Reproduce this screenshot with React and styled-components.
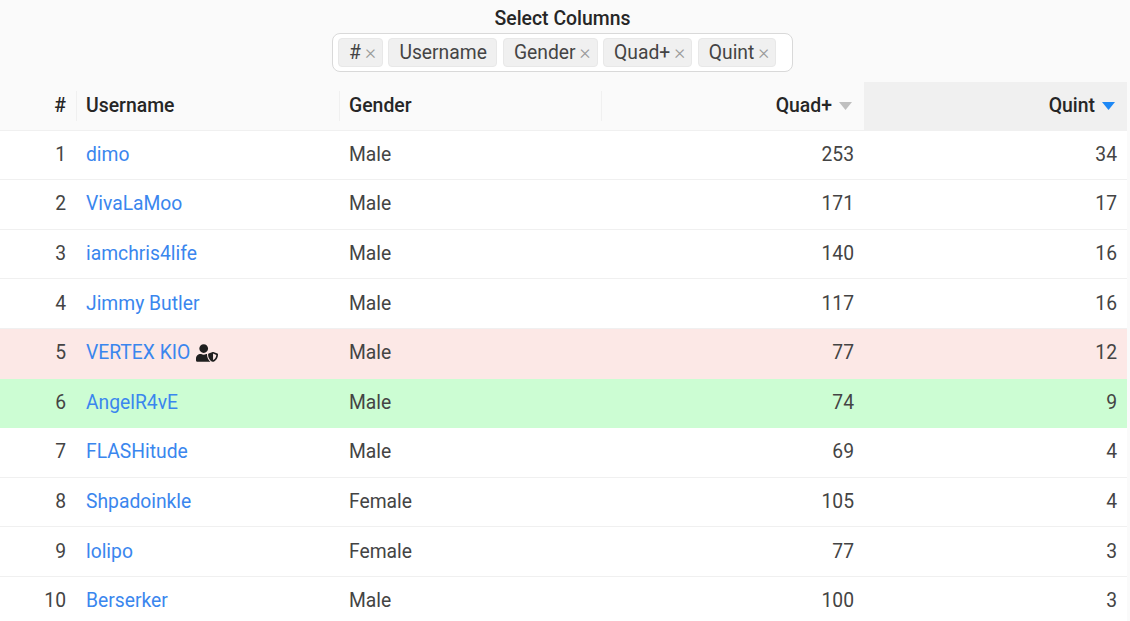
import React from "react";
import styled, { createGlobalStyle } from "styled-components";
import { FaUserShield } from "react-icons/fa";

const Global = createGlobalStyle`
  html, body { margin: 0; padding: 0; background: #fafafa; }
  body { font-family: Roboto, "Liberation Sans", sans-serif; color: #333; overflow: hidden; }
`;
const Page = styled.div`width: 1130px; height: 621px; overflow: hidden; background: #fafafa;`;
const Top = styled.div`
  width: 1125px; height: 82px; background: #fafafa; padding-top: 7px; box-sizing: border-box;
  display: flex; flex-direction: column; align-items: center;
`;
const Title = styled.div`font-size: 19.4px; font-weight: 500; line-height: 23px; color: #262626;`;
const Picker = styled.div`
  margin-top: 3px; width: 461px; height: 39px; box-sizing: border-box;
  border: 1px solid #d9d9d9; border-radius: 8px; background: #fff;
  display: flex; align-items: center; gap: 5.5px; padding: 0 5px;
`;
const Chip = styled.div`
  height: 29px; box-sizing: border-box; background: #f0f0f0; border: 1px solid #e8e8e8; border-radius: 4px;
  display: flex; align-items: center; gap: 4px; padding: 0 ${p => p.$closable ? 6 : 9.5}px 0 10px;
  font-size: 19.3px; color: #444;
`;
const Close = styled.span`color: #999; font-size: 21px; line-height: 1; font-weight: 300;`;
const Cols = "76px 263px 262px 263px 263px";
const HeadRow = styled.div`
  width: 1127px; height: 48.6px; display: grid; grid-template-columns: ${Cols};
  background: #fafafa; border-bottom: 1px solid #f0f0f0; box-sizing: border-box;
`;
const HeadCell = styled.div`
  display: flex; align-items: center; justify-content: ${p => p.$right ? "flex-end" : "flex-start"};
  padding: 0 ${p => p.$sort ? 12 : 10}px 0 10px; font-size: 19.4px; font-weight: 500; color: #262626; position: relative;
  background: ${p => p.$active ? "#f0f0f0" : "transparent"};
  ${p => p.$divider ? `&::before { content: ""; position: absolute; left: 0; top: 9px; bottom: 9px; width: 1px; background: #f0f0f0; }` : ""}
`;
const Caret = styled.svg`width: 13px; height: 8px; margin-left: 7px; flex: none;`;
const Row = styled.div`
  width: 1127px; height: 49.6px; display: grid; grid-template-columns: ${Cols}; box-sizing: border-box;
  background: ${p => p.$bg || "#fff"}; border-bottom: 1px solid ${p => p.$bg ? "transparent" : "#f0f0f0"};
`;
const Cell = styled.div`
  display: flex; align-items: center; justify-content: ${p => p.$right ? "flex-end" : "flex-start"};
  padding: 0 10px 1px; font-size: 19.3px; color: #444; white-space: nowrap;
`;
const Name = styled.a`color: #3a86ee; text-decoration: none;`;
const Badge = styled.span`display: inline-flex; margin-left: 6px; font-size: 22px; color: #1f1f1f;`;

const rows = [
  [1, "dimo", "Male", 253, 34], [2, "VivaLaMoo", "Male", 171, 17], [3, "iamchris4life", "Male", 140, 16],
  [4, "Jimmy Butler", "Male", 117, 16], [5, "VERTEX KIO", "Male", 77, 12, "#fce8e6", true],
  [6, "AngelR4vE", "Male", 74, 9, "#ccfdd3"], [7, "FLASHitude", "Male", 69, 4], [8, "Shpadoinkle", "Female", 105, 4],
  [9, "lolipo", "Female", 77, 3], [10, "Berserker", "Male", 100, 3],
];
const chips = [["#", 1], ["Username", 0], ["Gender", 1], ["Quad+", 1], ["Quint", 1]];

export default function App() {
  return (
    <Page>
      <Global />
      <Top>
        <Title>Select Columns</Title>
        <Picker>
          {chips.map(([c, x]) => <Chip key={c} $closable={!!x}>{c}{x ? <Close>×</Close> : null}</Chip>)}
        </Picker>
      </Top>
      <HeadRow>
        <HeadCell $right>#</HeadCell>
        <HeadCell $divider>Username</HeadCell>
        <HeadCell $divider>Gender</HeadCell>
        <HeadCell $divider $right $sort>Quad+<Caret viewBox="0 0 13 8"><path d="M0 0h13L6.5 8z" fill="#bfbfbf" /></Caret></HeadCell>
        <HeadCell $active $right $sort>Quint<Caret viewBox="0 0 13 8"><path d="M0 0h13L6.5 8z" fill="#1e88f5" /></Caret></HeadCell>
      </HeadRow>
      {rows.map(([n, name, g, q, qi, bg, admin]) => (
        <Row key={n} $bg={bg}>
          <Cell $right>{n}</Cell>
          <Cell><Name>{name}</Name>{admin ? <Badge><FaUserShield /></Badge> : null}</Cell>
          <Cell>{g}</Cell>
          <Cell $right>{q}</Cell>
          <Cell $right>{qi}</Cell>
        </Row>
      ))}
    </Page>
  );
}
